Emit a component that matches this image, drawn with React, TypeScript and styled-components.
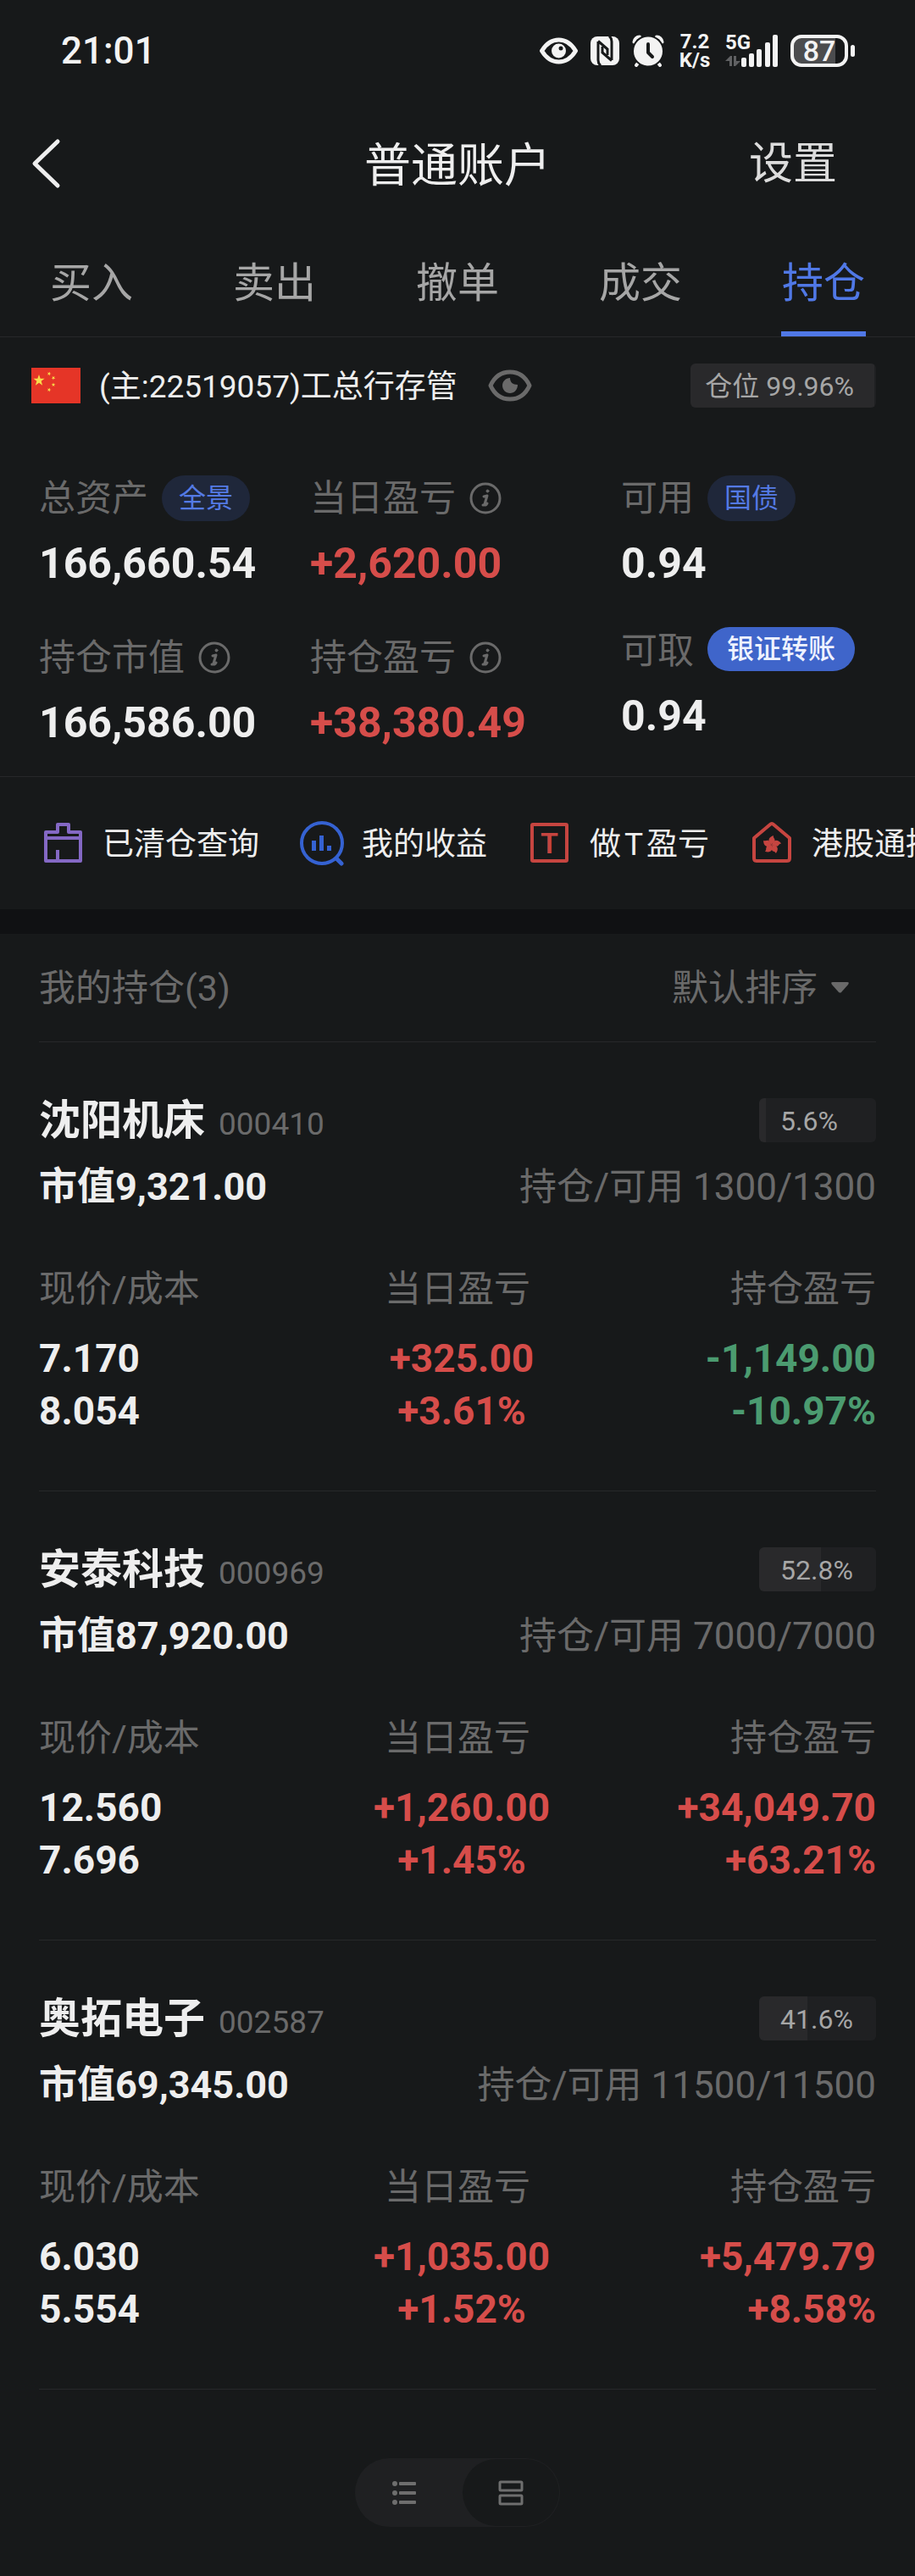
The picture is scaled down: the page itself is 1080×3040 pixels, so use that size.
import React, { useState } from "react";
import styled, { createGlobalStyle, css } from "styled-components";

const color = {
  page: "#17191a",
  band: "#101113",
  line: "#27282a",
  text: "#eeeeee",
  soft: "#a6a6a6",
  muted: "#6a6a6a",
  blue: "#5078e6",
  up: "#d64d4a",
  down: "#4b9b70",
  status: "#f3f3f3",
};

const GlobalStyle = createGlobalStyle`
  *, *::before, *::after { box-sizing: border-box; }
  body {
    margin: 0;
    background: ${color.page};
    color: ${color.text};
    font-family: Roboto, "Noto Sans CJK SC", sans-serif;
  }
  h1, h2, h3, p, ul { margin: 0; padding: 0; font-weight: inherit; font-size: inherit; }
  button {
    margin: 0;
    padding: 0;
    border: 0;
    background: none;
    color: inherit;
    font: inherit;
    cursor: pointer;
  }
  svg { display: block; flex: none; }
`;

const Page = styled.div`
  display: flex;
  flex-direction: column;
  background: ${color.page};
`;

/* ---------- status bar ---------- */

const StatusBar = styled.div`
  display: flex;
  align-items: center;
  justify-content: space-between;
  height: 120px;
  padding: 0 71px 0 72px;
  color: ${color.status};
`;

const Clock = styled.time`
  font-size: 44px;
  font-weight: 500;
  line-height: 50px;
`;

const StatusIcons = styled.div`
  display: flex;
  align-items: center;
  gap: 15px;
`;

const Speed = styled.div`
  display: flex;
  flex-direction: column;
  align-items: center;
  width: 42px;
  font-size: 24px;
  font-weight: 700;
  line-height: 22px;
`;

const Signal = styled.div`
  position: relative;
`;

const SignalLabel = styled.span`
  position: absolute;
  top: 0;
  left: 0;
  font-size: 24px;
  font-weight: 700;
  line-height: 18px;
`;

const Battery = styled.div`
  display: flex;
  align-items: center;
  gap: 3px;
`;

const BatteryBody = styled.div`
  display: flex;
  align-items: center;
  justify-content: center;
  width: 68px;
  height: 38px;
  border: 4px solid ${color.status};
  border-radius: 13px;
  background: linear-gradient(to right, #4b4c4e 82%, ${color.page} 82%);
  font-size: 34px;
  font-weight: 500;
  line-height: 30px;
`;

const BatteryTip = styled.div`
  width: 5px;
  height: 14px;
  border-radius: 3px;
  background: ${color.status};
`;

/* ---------- header and tabs ---------- */

const Header = styled.header`
  display: grid;
  grid-template-columns: 1fr auto 1fr;
  align-items: center;
  height: 146px;
  padding: 0 92px 0 36px;
`;

const BackButton = styled.button`
  justify-self: start;
  padding-right: 20px;
`;

const Title = styled.h1`
  padding: 4px 0 0 56px;
  font-size: 55px;
  line-height: 80px;
`;

const SettingsButton = styled.button`
  justify-self: end;
  padding-top: 2px;
  color: #dcdcdc;
  font-size: 52px;
  line-height: 80px;
`;

const Tabs = styled.nav`
  display: flex;
  height: 132px;
  border-bottom: 1px solid ${color.line};
`;

const Tab = styled.button<{ $active: boolean }>`
  display: flex;
  flex: 1;
  flex-direction: column;
  align-items: center;
  justify-content: space-between;
  padding-top: 34px;
  color: ${(p) => (p.$active ? color.blue : color.soft)};
  font-size: 49px;
  line-height: 70px;

  &::after {
    content: "";
    width: 100px;
    height: 6px;
    background: ${(p) => (p.$active ? color.blue : "transparent")};
  }
`;

/* ---------- account ---------- */

const AccountRow = styled.section`
  display: flex;
  align-items: center;
  height: 114px;
  padding: 0 46px 0 37px;
`;

const AccountName = styled.p`
  padding: 4px 36px 0 22px;
  font-size: 37px;
  line-height: 52px;
`;

const WeightBadge = styled.div<{ $fill: number; $wide?: boolean }>`
  min-width: 138px;
  height: 52px;
  margin-left: auto;
  padding: 0 ${(p) => (p.$wide ? 26 : 18)}px 0 ${(p) => (p.$wide ? 17 : 25)}px;
  border-radius: 6px;
  background: linear-gradient(to right, #29292b ${(p) => p.$fill}%, #1f2022 ${(p) => p.$fill}%);
  color: ${color.soft};
  font-size: 32px;
  line-height: 54px;
  white-space: nowrap;
`;

const Summary = styled.section`
  display: grid;
  grid-template-columns: 320fr 367fr 301fr;
  padding: 48px 46px 33px;
  border-bottom: 1px solid ${color.line};
`;

const SummaryColumn = styled.div<{ $tight?: boolean }>`
  display: flex;
  flex-direction: column;
  gap: ${(p) => (p.$tight ? 45 : 53)}px;
  min-width: 0;
`;

const Metric = styled.div`
  display: flex;
  flex-direction: column;
  gap: 19px;
`;

const MetricLabel = styled.div`
  display: flex;
  align-items: center;
  gap: 16px;
  height: 56px;
  color: ${color.muted};
  font-size: 43px;
  line-height: 56px;
  white-space: nowrap;
`;

const MetricValue = styled.div<{ $tone?: "up" | "down" }>`
  color: ${(p) => (p.$tone ? color[p.$tone] : color.text)};
  font-size: 50px;
  font-weight: 700;
  line-height: 60px;
`;

const Pill = styled.button<{ $solid?: boolean }>`
  height: 54px;
  padding: 0 20px;
  border-radius: 27px;
  background: #1f273a;
  color: #547ae4;
  font-size: 32px;
  line-height: 54px;
  ${(p) =>
    p.$solid &&
    css`
      align-self: flex-start;
      height: 52px;
      padding: 0 23px;
      background: #3f65ca;
      color: #eef2ff;
      font-weight: 500;
      line-height: 52px;
    `}
`;

/* ---------- shortcuts ---------- */

const Shortcuts = styled.nav`
  display: flex;
  align-items: center;
  gap: 48px;
  height: 156px;
  padding-left: 48px;
  overflow-x: auto;
  scrollbar-width: none;
`;

const Shortcut = styled.button`
  display: flex;
  flex: none;
  align-items: center;
  gap: 21px;
  font-size: 37px;
  white-space: nowrap;
`;

const ShortcutLabel = styled.span`
  padding-top: 4px;
  line-height: 52px;
`;

const Latin = styled.span`
  margin: 0 4px;
`;

const Band = styled.div`
  height: 29px;
  background: ${color.band};
`;

/* ---------- holdings ---------- */

const Holdings = styled.section`
  padding: 0 46px;
`;

const HoldingsHead = styled.div`
  display: flex;
  align-items: center;
  justify-content: space-between;
  height: 128px;
  padding-right: 32px;
  border-bottom: 1px solid ${color.line};
  color: ${color.muted};
  font-size: 43px;
  line-height: 60px;
`;

const SortButton = styled.button`
  display: flex;
  align-items: center;
  gap: 16px;
`;

const Holding = styled.article`
  padding: 62px 0 63px;
  border-bottom: 1px solid ${color.line};
`;

const HoldingTop = styled.div`
  display: flex;
  align-items: center;
  height: 60px;
`;

const StockName = styled.h3`
  padding-top: 6px;
  font-size: 49px;
  font-weight: 700;
  line-height: 60px;
`;

const StockCode = styled.span`
  margin-left: 16px;
  color: ${color.muted};
  font-size: 37px;
  font-weight: 400;
`;

const HoldingWorth = styled.div`
  display: flex;
  justify-content: space-between;
  margin-top: 23px;
  line-height: 52px;
`;

const Worth = styled.span`
  font-size: 45px;
  font-weight: 700;
`;

const Quantity = styled.span`
  color: ${color.muted};
  font-size: 44px;
`;

const Figures = styled.table`
  width: 100%;
  margin-top: 64px;
  border-collapse: collapse;
  table-layout: fixed;
  font-size: 46px;
  line-height: 62px;

  th {
    padding: 0 0 21px;
    color: ${color.muted};
    font-size: 43px;
    font-weight: 400;
    line-height: 60px;
  }

  td {
    padding: 0;
    font-weight: 700;
  }

  th:nth-child(1), td:nth-child(1) { text-align: left; }
  th:nth-child(2), td:nth-child(2) { text-align: center; }
  th:nth-child(3), td:nth-child(3) { text-align: right; }
  td:nth-child(2) { padding-left: 10px; }
`;

const Figure = styled.td<{ $value?: string }>`
  color: ${(p) => (!p.$value ? color.text : p.$value.startsWith("+") ? color.up : color.down)};
`;

/* ---------- view switch ---------- */

const Footer = styled.footer`
  display: flex;
  justify-content: center;
  padding: 81px 0 58px;
`;

const ViewSwitch = styled.div`
  display: flex;
  gap: 12px;
  width: 242px;
  height: 81px;
  padding: 1px;
  border-radius: 41px;
  background: #1f2022;
`;

const ViewButton = styled.button<{ $active: boolean }>`
  display: flex;
  flex: 1;
  align-items: center;
  justify-content: center;
  border-radius: 40px;
  background: ${(p) => (p.$active ? color.page : "transparent")};
`;

/* ---------- icons ---------- */

const EyeStatusIcon = () => (
  <svg width="45" height="32" viewBox="0 0 45 32" fill="none">
    <path d="M2.500 16C8 7 14.500 3 22.500 3S37 7 42.500 16C37 25 30.500 29 22.500 29S8 25 2.500 16Z" stroke={color.status} strokeWidth="5" strokeLinejoin="round" />
    <circle cx="22.500" cy="16" r="8.500" fill={color.status} />
    <circle cx="25" cy="13" r="2.500" fill={color.page} />
  </svg>
);

const NfcIcon = () => (
  <svg width="34" height="36" viewBox="0 0 34 36">
    <rect y="1" width="34" height="34" rx="8" fill={color.status} />
    <path d="M9 7v22c0 3 1 5 3 6.500M9 6.500L20 16M25 29V7c0-3-1-5-3-6.500M25 29.500L14 20" fill="none" stroke={color.page} strokeWidth="3" />
    <path d="M14 13v8M20 15v8" fill="none" stroke={color.page} strokeWidth="3" />
  </svg>
);

const AlarmIcon = () => (
  <svg width="38" height="38" viewBox="0 0 38 38" fill="none" strokeLinecap="round" strokeLinejoin="round">
    <path d="M2.500 8.500C3 5 5.500 2.500 9 2.500M35.500 8.500C35 5 32.500 2.500 29 2.500" stroke={color.status} strokeWidth="4" />
    <path d="M9 31l-4 5M29 31l4 5" stroke={color.status} strokeWidth="4" />
    <circle cx="19" cy="19.500" r="18" fill={color.status} stroke={color.page} strokeWidth="2" />
    <path d="M19 11v10l5 5" stroke={color.page} strokeWidth="4" />
  </svg>
);

const SignalIcon = () => (
  <svg width="62" height="38" viewBox="0 0 62 38">
    <g fill="#606163">
      <path d="M0 31l6-6h2v12H5v-6Z" />
      <path d="M10 25h3v6h5l-6 6h-2Z" />
    </g>
    <g fill={color.status}>
      <rect x="19" y="27" width="6" height="11" rx="2" />
      <rect x="28" y="22" width="6" height="16" rx="2" />
      <rect x="37" y="17" width="6" height="21" rx="2" />
      <rect x="47" y="9" width="6" height="29" rx="2" />
      <rect x="56" y="0" width="6" height="38" rx="2" />
    </g>
  </svg>
);

const BackIcon = () => (
  <svg width="36" height="60" viewBox="0 0 36 60" fill="none">
    <path d="M32 4L5 30l27 26" stroke="#eeeeee" strokeWidth="5" strokeLinecap="round" strokeLinejoin="round" />
  </svg>
);

const starPoints = (cx: number, cy: number, r: number, turn = 0) =>
  Array.from({ length: 10 }, (_, i) => {
    const radius = i % 2 ? r * 0.4 : r;
    const angle = ((i * 36 - 90 + turn) * Math.PI) / 180;
    return `${(cx + radius * Math.cos(angle)).toFixed(2)},${(cy + radius * Math.sin(angle)).toFixed(2)}`;
  }).join(" ");

const FlagIcon = () => (
  <svg width="58" height="42" viewBox="0 0 58 42" role="img" aria-label="中国">
    <rect width="58" height="42" fill="#e53527" />
    <g fill="#f8dc4a">
      <polygon points={starPoints(9, 15, 7)} />
      <polygon points={starPoints(21, 7, 2.5, 20)} />
      <polygon points={starPoints(26, 12, 2.5, 40)} />
      <polygon points={starPoints(26, 20, 2.5)} />
      <polygon points={starPoints(21, 26, 2.5, 20)} />
    </g>
  </svg>
);

const EyeIcon = () => (
  <svg width="52" height="38" viewBox="0 0 52 38" fill="none">
    <path d="M3 19C8 8 16 3 26 3S44 8 49 19C44 30 36 35 26 35S8 30 3 19Z" stroke="#6a6a6a" strokeWidth="5" strokeLinejoin="round" />
    <path d="M26 10c0 5 3 8 9 8 0 6-4 10-9 10s-9-4-9-9 4-9 9-9Z" fill="#6a6a6a" />
  </svg>
);

const InfoIcon = () => (
  <svg width="38" height="38" viewBox="0 0 38 38" fill="none" stroke="#6a6a6a" strokeLinecap="round" strokeLinejoin="round">
    <circle cx="19" cy="19" r="17" strokeWidth="3" />
    <circle cx="21.500" cy="10.500" r="1.500" fill="#6a6a6a" strokeWidth="1" />
    <path d="M17 17l4-1-3 10c0 2 2 1 3-1M16 27h2" strokeWidth="3" />
  </svg>
);

const ClearedIcon = () => (
  <svg width="52" height="52" viewBox="0 0 52 52" fill="none" stroke="#8468c4" strokeWidth="4" strokeLinejoin="round">
    <path d="M6 13h14V4h13v9h14v34H6Z" />
    <path d="M6 20h41M20 34v13" />
  </svg>
);

const ProfitIcon = () => (
  <svg width="52" height="54" viewBox="0 0 52 54" fill="none" stroke="#3562d2">
    <circle cx="26" cy="27" r="24" strokeWidth="4" />
    <path d="M43 45l6 6" strokeWidth="5" strokeLinecap="round" />
    <path d="M16.500 24v12M25.500 18v18M34.500 30v6" strokeWidth="5" />
  </svg>
);

const TradeIcon = () => (
  <svg width="52" height="52" viewBox="0 0 52 52">
    <rect x="5" y="4" width="41" height="43" rx="1" fill="none" stroke="#c64540" strokeWidth="4" strokeLinejoin="round" />
    <text x="25.500" y="38" textAnchor="middle" fontFamily="Roboto, sans-serif" fontSize="34" fontWeight="600" fill="#c64540">T</text>
  </svg>
);

const HongKongIcon = () => (
  <svg width="52" height="52" viewBox="0 0 52 52" fill="none">
    <path d="M5 20L24 4q2-2 4 0L47 20v24q0 3-3 3H8q-3 0-3-3Z" stroke="#c64540" strokeWidth="4" strokeLinejoin="round" />
    <g fill="#c64540">
      {[0, 72, 144, 216, 288].map((turn) => (
        <path key={turn} d="M26 28C21 25 21 19 28 17c-1 3 3 4 1 7-1 2-3 2-3 4Z" transform={`rotate(${turn} 26 28)`} />
      ))}
    </g>
  </svg>
);

const CaretIcon = () => (
  <svg width="21" height="13" viewBox="0 0 21 13">
    <path d="M2 0h17q3 0 1 3l-8 9q-1 1-3 0L1 3Q-1 0 2 0Z" fill="#6a6a6a" />
  </svg>
);

const ListIcon = () => (
  <svg width="28" height="30" viewBox="0 0 28 30" fill="#6e6e6e">
    {[4, 15, 26].map((y) => (
      <React.Fragment key={y}>
        <circle cx="3" cy={y} r="3" />
        <rect x="8" y={y - 2} width="20" height="4" rx="1" />
      </React.Fragment>
    ))}
  </svg>
);

const CardsIcon = () => (
  <svg width="30" height="30" viewBox="0 0 30 30" fill="none" stroke="#6e6e6e" strokeWidth="3">
    <rect x="2" y="2" width="26" height="10" rx="1" />
    <rect x="2" y="18" width="26" height="10" rx="1" />
  </svg>
);

/* ---------- data ---------- */

const tabs = ["买入", "卖出", "撤单", "成交", "持仓"];

const shortcuts = [
  { id: "cleared", label: "已清仓查询", icon: <ClearedIcon /> },
  { id: "profit", label: "我的收益", icon: <ProfitIcon /> },
  { id: "trade", label: <>做<Latin>T</Latin>盈亏</>, icon: <TradeIcon /> },
  { id: "hongkong", label: "港股通持仓", icon: <HongKongIcon /> },
];

const holdings = [
  { name: "沈阳机床", code: "000410", weight: 5.6, worth: "9,321.00", quantity: "1300/1300", price: "7.170", cost: "8.054", day: "+325.00", dayRate: "+3.61%", total: "-1,149.00", totalRate: "-10.97%" },
  { name: "安泰科技", code: "000969", weight: 52.8, worth: "87,920.00", quantity: "7000/7000", price: "12.560", cost: "7.696", day: "+1,260.00", dayRate: "+1.45%", total: "+34,049.70", totalRate: "+63.21%" },
  { name: "奥拓电子", code: "002587", weight: 41.6, worth: "69,345.00", quantity: "11500/11500", price: "6.030", cost: "5.554", day: "+1,035.00", dayRate: "+1.52%", total: "+5,479.79", totalRate: "+8.58%" },
];

export default function App() {
  const [tab, setTab] = useState("持仓");
  const [view, setView] = useState("cards");

  return (
    <Page lang="zh-CN">
      <GlobalStyle />
      <StatusBar>
        <Clock>21:01</Clock>
        <StatusIcons>
          <EyeStatusIcon />
          <NfcIcon />
          <AlarmIcon />
          <Speed>
            <span>7.2</span>
            <span>K/s</span>
          </Speed>
          <Signal>
            <SignalIcon />
            <SignalLabel>5G</SignalLabel>
          </Signal>
          <Battery>
            <BatteryBody>87</BatteryBody>
            <BatteryTip />
          </Battery>
        </StatusIcons>
      </StatusBar>

      <Header>
        <BackButton aria-label="返回">
          <BackIcon />
        </BackButton>
        <Title>普通账户</Title>
        <SettingsButton>设置</SettingsButton>
      </Header>

      <Tabs>
        {tabs.map((name) => (
          <Tab key={name} $active={name === tab} onClick={() => setTab(name)}>
            {name}
          </Tab>
        ))}
      </Tabs>

      <AccountRow>
        <FlagIcon />
        <AccountName>(主:22519057)工总行存管</AccountName>
        <button aria-label="隐藏金额">
          <EyeIcon />
        </button>
        <WeightBadge $fill={99} $wide>仓位 99.96%</WeightBadge>
      </AccountRow>

      <Summary>
        <SummaryColumn>
          <Metric>
            <MetricLabel>总资产<Pill>全景</Pill></MetricLabel>
            <MetricValue>166,660.54</MetricValue>
          </Metric>
          <Metric>
            <MetricLabel>持仓市值<InfoIcon /></MetricLabel>
            <MetricValue>166,586.00</MetricValue>
          </Metric>
        </SummaryColumn>
        <SummaryColumn>
          <Metric>
            <MetricLabel>当日盈亏<InfoIcon /></MetricLabel>
            <MetricValue $tone="up">+2,620.00</MetricValue>
          </Metric>
          <Metric>
            <MetricLabel>持仓盈亏<InfoIcon /></MetricLabel>
            <MetricValue $tone="up">+38,380.49</MetricValue>
          </Metric>
        </SummaryColumn>
        <SummaryColumn $tight>
          <Metric>
            <MetricLabel>可用<Pill>国债</Pill></MetricLabel>
            <MetricValue>0.94</MetricValue>
          </Metric>
          <Metric>
            <MetricLabel>可取<Pill $solid>银证转账</Pill></MetricLabel>
            <MetricValue>0.94</MetricValue>
          </Metric>
        </SummaryColumn>
      </Summary>

      <Shortcuts>
        {shortcuts.map((item) => (
          <Shortcut key={item.id}>
            {item.icon}
            <ShortcutLabel>{item.label}</ShortcutLabel>
          </Shortcut>
        ))}
      </Shortcuts>
      <Band />

      <Holdings>
        <HoldingsHead>
          <h2>我的持仓({holdings.length})</h2>
          <SortButton>
            默认排序
            <CaretIcon />
          </SortButton>
        </HoldingsHead>
        {holdings.map((item) => (
          <Holding key={item.code}>
            <HoldingTop>
              <StockName>
                {item.name}
                <StockCode>{item.code}</StockCode>
              </StockName>
              <WeightBadge $fill={item.weight}>{item.weight}%</WeightBadge>
            </HoldingTop>
            <HoldingWorth>
              <Worth>市值{item.worth}</Worth>
              <Quantity>持仓/可用 {item.quantity}</Quantity>
            </HoldingWorth>
            <Figures>
              <thead>
                <tr>
                  <th scope="col">现价/成本</th>
                  <th scope="col">当日盈亏</th>
                  <th scope="col">持仓盈亏</th>
                </tr>
              </thead>
              <tbody>
                <tr>
                  <Figure>{item.price}</Figure>
                  <Figure $value={item.day}>{item.day}</Figure>
                  <Figure $value={item.total}>{item.total}</Figure>
                </tr>
                <tr>
                  <Figure>{item.cost}</Figure>
                  <Figure $value={item.dayRate}>{item.dayRate}</Figure>
                  <Figure $value={item.totalRate}>{item.totalRate}</Figure>
                </tr>
              </tbody>
            </Figures>
          </Holding>
        ))}
      </Holdings>

      <Footer>
        <ViewSwitch>
          <ViewButton aria-label="列表视图" $active={view === "list"} onClick={() => setView("list")}>
            <ListIcon />
          </ViewButton>
          <ViewButton aria-label="卡片视图" $active={view === "cards"} onClick={() => setView("cards")}>
            <CardsIcon />
          </ViewButton>
        </ViewSwitch>
      </Footer>
    </Page>
  );
}
